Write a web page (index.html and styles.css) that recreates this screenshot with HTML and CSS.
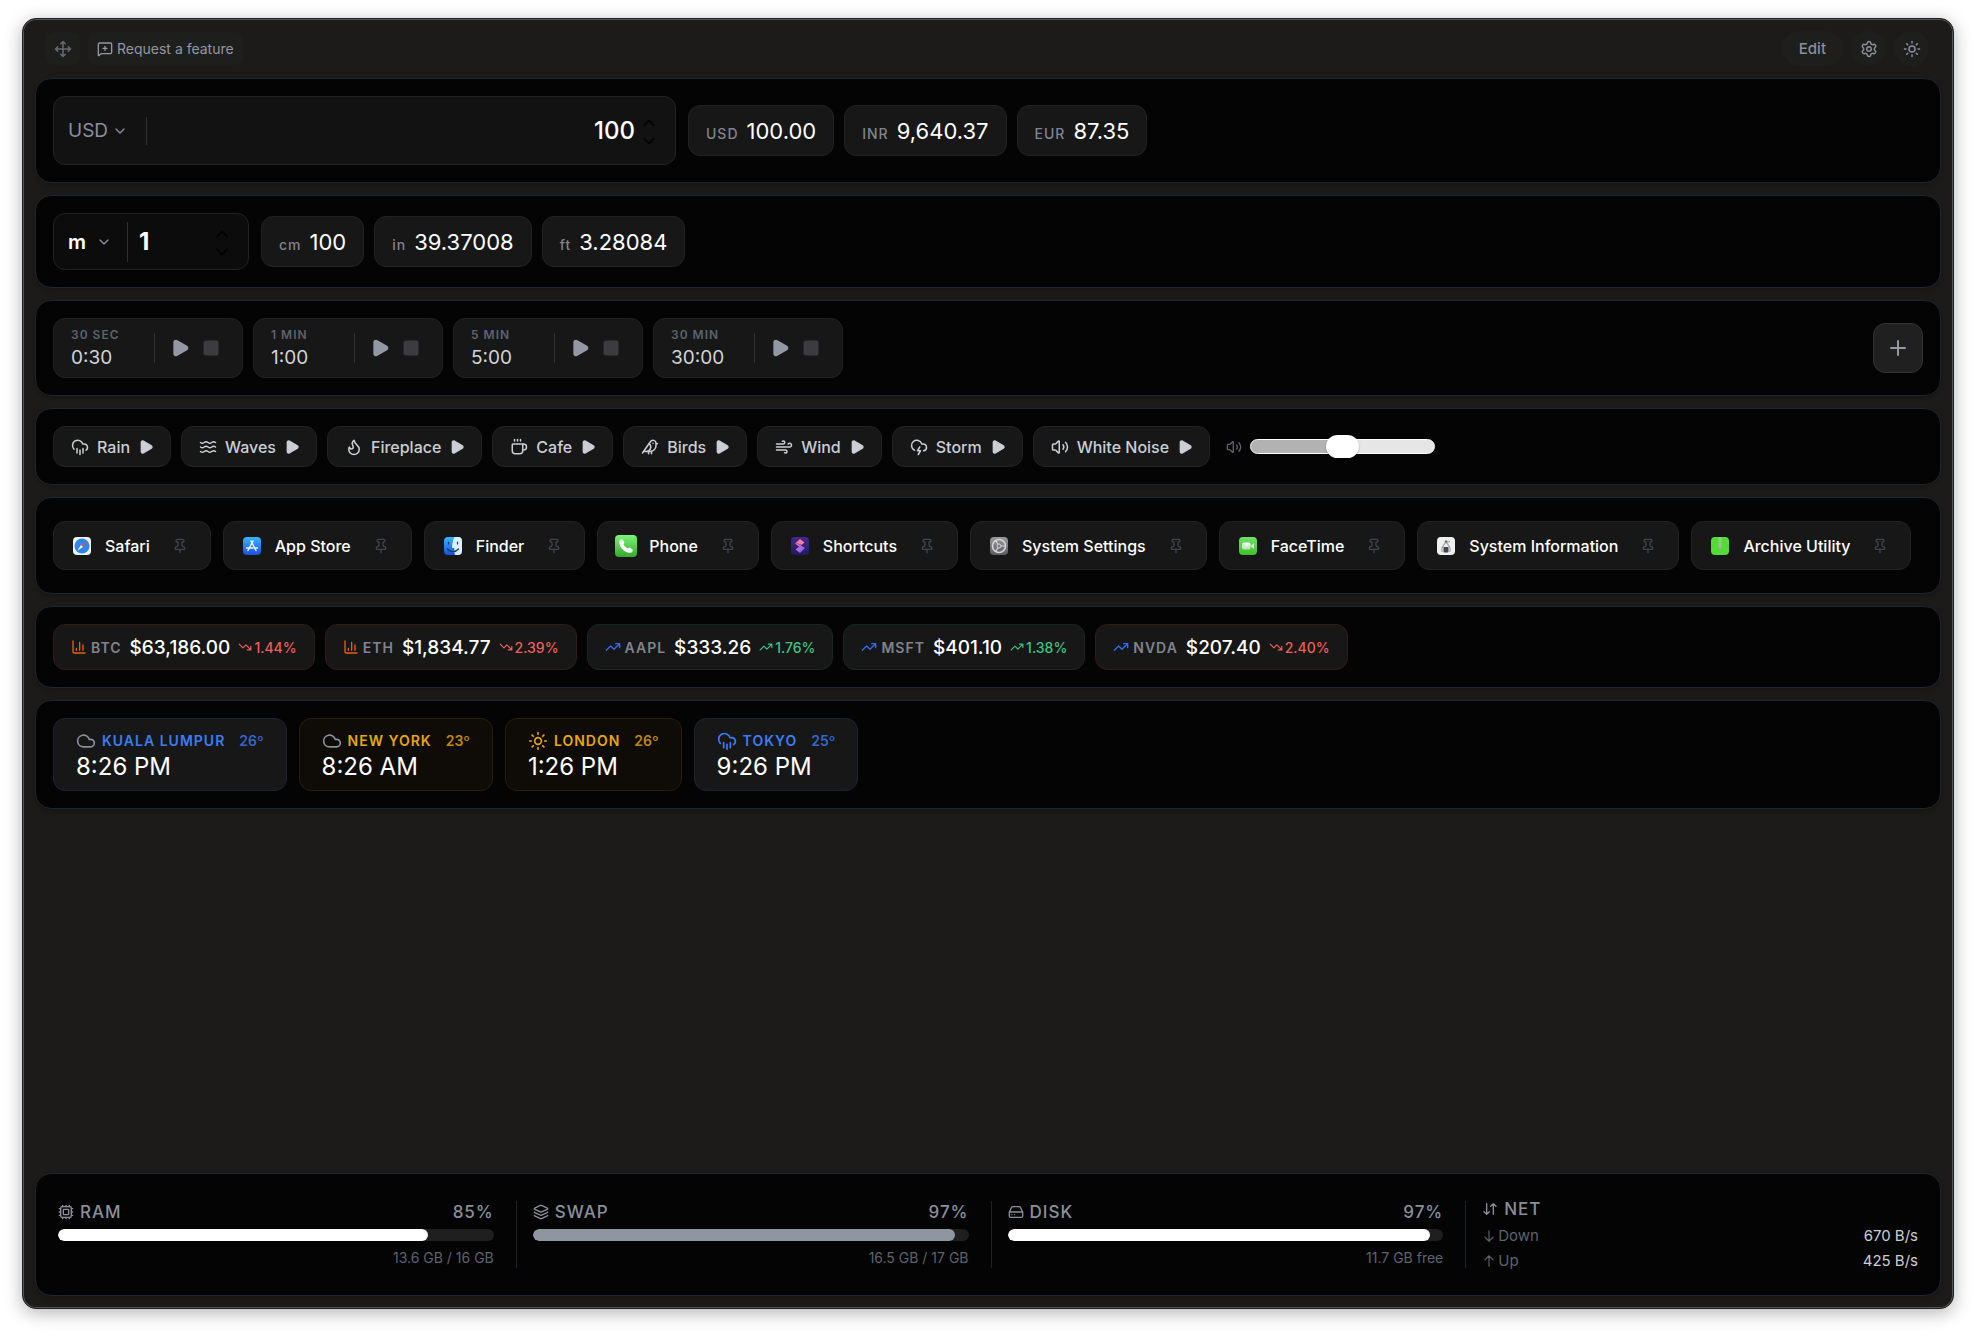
FILE: index.html
```html
<!DOCTYPE html>
<html lang="en">
<head>
    <meta charset="UTF-8">
    <meta name="viewport" content="width=device-width, initial-scale=1.0">
    <title>Dashboard</title>
    <link rel="stylesheet" href="styles.css">
</head>
<body>
    <svg class="sprite" aria-hidden="true">
        <symbol id="move" viewBox="0 0 24 24"><path d="M12 2v20M15 19l-3 3-3-3M19 9l3 3-3 3M2 12h20M5 9l-3 3 3 3M9 5l3-3 3 3"/></symbol>
        <symbol id="message" viewBox="0 0 24 24"><path d="M22 17a2 2 0 0 1-2 2H6.828a2 2 0 0 0-1.414.586l-2.202 2.202A.71.71 0 0 1 2 21.286V5a2 2 0 0 1 2-2h16a2 2 0 0 1 2 2zM12 8v6M9 11h6"/></symbol>
        <symbol id="down" viewBox="0 0 24 24"><path d="m6 9 6 6 6-6"/></symbol>
        <symbol id="up" viewBox="0 0 24 24"><path d="m18 15-6-6-6 6"/></symbol>
        <symbol id="settings" viewBox="0 0 24 24"><path d="M9.671 4.136a2.34 2.34 0 0 1 4.659 0 2.34 2.34 0 0 0 3.319 1.915 2.34 2.34 0 0 1 2.33 4.033 2.34 2.34 0 0 0 0 3.831 2.34 2.34 0 0 1-2.33 4.033 2.34 2.34 0 0 0-3.319 1.915 2.34 2.34 0 0 1-4.659 0 2.34 2.34 0 0 0-3.32-1.915 2.34 2.34 0 0 1-2.33-4.033 2.34 2.34 0 0 0 0-3.831A2.34 2.34 0 0 1 6.35 6.051a2.34 2.34 0 0 0 3.319-1.915"/><circle cx="12" cy="12" r="3"/></symbol>
        <symbol id="sun" viewBox="0 0 24 24"><circle cx="12" cy="12" r="4"/><path d="M12 2v2M12 20v2M4.93 4.93l1.41 1.41M17.66 17.66l1.41 1.41M2 12h2M20 12h2M6.34 17.66l-1.41 1.41M19.07 4.93l-1.41 1.41"/></symbol>
        <symbol id="plus" viewBox="0 0 24 24"><path d="M5 12h14M12 5v14"/></symbol>
        <symbol id="play" viewBox="0 0 24 24"><path fill="currentColor" d="M5 5a2 2 0 0 1 3.008-1.728l11.997 6.998a2 2 0 0 1 .003 3.458l-12 7A2 2 0 0 1 5 19z"/></symbol>
        <symbol id="stop" viewBox="0 0 24 24"><rect fill="currentColor" x="3" y="3" width="18" height="18" rx="2"/></symbol>
        <symbol id="rain" viewBox="0 0 24 24"><path d="M4 14.899A7 7 0 1 1 15.71 8h1.79a4.5 4.5 0 0 1 2.5 8.242M16 14v6M8 14v6M12 16v6"/></symbol>
        <symbol id="waves" viewBox="0 0 24 24"><path d="M2 6c.6.5 1.2 1 2.5 1C7 7 7 5 9.500 5c2.600 0 2.400 2 5 2 2.500 0 2.500-2 5-2 1.300 0 1.900.5 2.500 1M2 12c.6.5 1.200 1 2.500 1 2.500 0 2.500-2 5-2 2.600 0 2.400 2 5 2 2.500 0 2.500-2 5-2 1.300 0 1.900.5 2.500 1M2 18c.6.5 1.200 1 2.500 1 2.500 0 2.500-2 5-2 2.600 0 2.400 2 5 2 2.500 0 2.500-2 5-2 1.300 0 1.900.5 2.500 1"/></symbol>
        <symbol id="flame" viewBox="0 0 24 24"><path d="M8.5 14.5A2.5 2.5 0 0 0 11 12c0-1.380-.5-2-1-3-1.072-2.143-.224-4.054 2-6 .5 2.500 2 4.900 4 6.500 2 1.600 3 3.500 3 5.500a7 7 0 1 1-14 0c0-1.153.433-2.294 1-3a2.500 2.500 0 0 0 2.500 2.500z"/></symbol>
        <symbol id="coffee" viewBox="0 0 24 24"><path d="M10 2v2M14 2v2M6 2v2M16 8a1 1 0 0 1 1 1v8a4 4 0 0 1-4 4H7a4 4 0 0 1-4-4V9a1 1 0 0 1 1-1h14a4 4 0 1 1 0 8h-1"/></symbol>
        <symbol id="bird" viewBox="0 0 24 24"><path d="M16 7h.01M3.400 18H12a8 8 0 0 0 8-8V7a4 4 0 0 0-7.280-2.300L2 20M20 7l2 .5-2 .5M10 18v3M14 17.750V21M7 18a6 6 0 0 0 3.840-10.610"/></symbol>
        <symbol id="wind" viewBox="0 0 24 24"><path d="M12.800 19.600A2 2 0 1 0 14 16H2M17.500 8a2.500 2.500 0 1 1 2 4H2M9.800 4.400A2 2 0 1 1 11 8H2"/></symbol>
        <symbol id="storm" viewBox="0 0 24 24"><path d="M6 16.326A7 7 0 1 1 15.710 8h1.790a4.500 4.500 0 0 1 .5 8.973M13 12l-3 5h4l-3 5"/></symbol>
        <symbol id="volume" viewBox="0 0 24 24"><path d="M11 4.702a.705.705 0 0 0-1.203-.498L6.413 7.587A1.400 1.400 0 0 1 5.416 8H3a1 1 0 0 0-1 1v6a1 1 0 0 0 1 1h2.416a1.400 1.400 0 0 1 .997.413l3.383 3.384A.705.705 0 0 0 11 19.298zM16 9a5 5 0 0 1 0 6M19.364 18.364a9 9 0 0 0 0-12.728"/></symbol>
        <symbol id="pin" viewBox="0 0 24 24"><path d="M12 17v5M9 10.760a2 2 0 0 1-1.110 1.790l-1.780.9A2 2 0 0 0 5 15.240V16a1 1 0 0 0 1 1h12a1 1 0 0 0 1-1v-.76a2 2 0 0 0-1.110-1.790l-1.780-.9A2 2 0 0 1 15 10.760V7a1 1 0 0 1 1-1 2 2 0 0 0 0-4H8a2 2 0 0 0 0 4 1 1 0 0 1 1 1z"/></symbol>
        <symbol id="chart" viewBox="0 0 24 24"><path d="M3 3v16a2 2 0 0 0 2 2h16M18 17V9M13 17V5M8 17v-3"/></symbol>
        <symbol id="trend-up" viewBox="0 0 24 24"><path d="M16 7h6v6M22 7l-8.500 8.500-5-5L2 17"/></symbol>
        <symbol id="trend-down" viewBox="0 0 24 24"><path d="M16 17h6v-6M22 17l-8.500-8.500-5 5L2 7"/></symbol>
        <symbol id="cloud" viewBox="0 0 24 24"><path d="M17.500 19H9a7 7 0 1 1 6.710-9h1.790a4.500 4.500 0 1 1 0 9Z"/></symbol>
        <symbol id="cpu" viewBox="0 0 24 24"><path d="M12 20v2M12 2v2M17 20v2M17 2v2M2 12h2M2 17h2M2 7h2M20 12h2M20 17h2M20 7h2M7 20v2M7 2v2"/><rect x="4" y="4" width="16" height="16" rx="2"/><rect x="8" y="8" width="8" height="8" rx="1"/></symbol>
        <symbol id="layers" viewBox="0 0 24 24"><path d="M12.830 2.180a2 2 0 0 0-1.660 0L2.600 6.080a1 1 0 0 0 0 1.830l8.580 3.910a2 2 0 0 0 1.660 0l8.580-3.900a1 1 0 0 0 0-1.830zM2 12a1 1 0 0 0 .58.91l8.600 3.910a2 2 0 0 0 1.650 0l8.580-3.900A1 1 0 0 0 22 12M2 17a1 1 0 0 0 .58.91l8.600 3.910a2 2 0 0 0 1.650 0l8.580-3.900A1 1 0 0 0 22 17"/></symbol>
        <symbol id="drive" viewBox="0 0 24 24"><path d="M22 12H2M5.450 5.110 2 12v6a2 2 0 0 0 2 2h16a2 2 0 0 0 2-2v-6l-3.450-6.890A2 2 0 0 0 16.760 4H7.240a2 2 0 0 0-1.790 1.110zM6 16h.01M10 16h.01"/></symbol>
        <symbol id="down-up" viewBox="0 0 24 24"><path d="m3 16 4 4 4-4M7 20V4M21 8l-4-4-4 4M17 4v16"/></symbol>
        <symbol id="arrow-down" viewBox="0 0 24 24"><path d="M12 3v18M19 14l-7 7-7-7"/></symbol>
        <symbol id="arrow-up" viewBox="0 0 24 24"><path d="m5 10 7-7 7 7M12 21V3"/></symbol>
        <linearGradient id="g-blue" x2="0" y2="1"><stop offset="0" stop-color="#38b6fb"/><stop offset="1" stop-color="#1c4fe0"/></linearGradient>
        <linearGradient id="g-green" x2="0" y2="1"><stop offset="0" stop-color="#7df577"/><stop offset="1" stop-color="#35a82f"/></linearGradient>
        <linearGradient id="g-lime" x2="0" y2="1"><stop offset="0" stop-color="#6fe06a"/><stop offset="1" stop-color="#43bf2c"/></linearGradient>
        <linearGradient id="g-gray" x2="0" y2="1"><stop offset="0" stop-color="#9a9a9c"/><stop offset="1" stop-color="#5c5c60"/></linearGradient>
        <linearGradient id="g-purple" x2="0" y2="1"><stop offset="0" stop-color="#43298f"/><stop offset="1" stop-color="#231a5c"/></linearGradient>
        <linearGradient id="g-pink" x2="1" y2="1"><stop offset="0" stop-color="#f0709f"/><stop offset=".5" stop-color="#b06be0"/><stop offset="1" stop-color="#4a63f0"/></linearGradient>
        <linearGradient id="g-cam" x2="0" y2="1"><stop offset="0" stop-color="#fff"/><stop offset="1" stop-color="#a9e8a0"/></linearGradient>
    </svg>

    <main class="window">
        <header class="topbar">
            <button class="chip-btn" aria-label="Move"><svg class="icon i18"><use href="#move"/></svg></button>
            <button class="chip-btn request"><svg class="icon i16"><use href="#message"/></svg>Request a feature</button>
            <button class="round-btn edit">Edit</button>
            <button class="round-btn" aria-label="Settings"><svg class="icon i18"><use href="#settings"/></svg></button>
            <button class="round-btn" aria-label="Theme"><svg class="icon i18"><use href="#sun"/></svg></button>
        </header>

        <section class="panel">
            <div class="converter currency">
                <select aria-label="Currency"><option>USD</option><option>INR</option><option>EUR</option></select>
                <svg class="icon i16"><use href="#down"/></svg>
                <input type="text" inputmode="decimal" aria-label="Amount" value="100">
                <span class="spinner">
                    <button aria-label="Increase"><svg class="icon i20"><use href="#up"/></svg></button>
                    <button aria-label="Decrease"><svg class="icon i20"><use href="#down"/></svg></button>
                </span>
            </div>
            <div class="row">
                <div class="value"><span>USD</span><b>100.00</b></div>
                <div class="value"><span>INR</span><b>9,640.37</b></div>
                <div class="value"><span>EUR</span><b>87.35</b></div>
            </div>
        </section>

        <section class="panel">
            <div class="converter unit">
                <select aria-label="Unit"><option>m</option><option>cm</option><option>in</option><option>ft</option></select>
                <svg class="icon i16"><use href="#down"/></svg>
                <input type="text" inputmode="decimal" aria-label="Length" value="1">
                <span class="spinner">
                    <button aria-label="Increase"><svg class="icon i20"><use href="#up"/></svg></button>
                    <button aria-label="Decrease"><svg class="icon i20"><use href="#down"/></svg></button>
                </span>
            </div>
            <div class="row">
                <div class="value"><span>cm</span><b>100</b></div>
                <div class="value"><span>in</span><b>39.37008</b></div>
                <div class="value"><span>ft</span><b>3.28084</b></div>
            </div>
        </section>

        <section class="panel">
            <div class="row">
                <div class="timer">
                    <div><h3>30 SEC</h3><p>0:30</p></div>
                    <div class="timer-controls">
                        <button aria-label="Start"><svg class="icon i20"><use href="#play"/></svg></button>
                        <button class="stop" aria-label="Stop"><svg class="icon i18"><use href="#stop"/></svg></button>
                    </div>
                </div>
                <div class="timer">
                    <div><h3>1 MIN</h3><p>1:00</p></div>
                    <div class="timer-controls">
                        <button aria-label="Start"><svg class="icon i20"><use href="#play"/></svg></button>
                        <button class="stop" aria-label="Stop"><svg class="icon i18"><use href="#stop"/></svg></button>
                    </div>
                </div>
                <div class="timer">
                    <div><h3>5 MIN</h3><p>5:00</p></div>
                    <div class="timer-controls">
                        <button aria-label="Start"><svg class="icon i20"><use href="#play"/></svg></button>
                        <button class="stop" aria-label="Stop"><svg class="icon i18"><use href="#stop"/></svg></button>
                    </div>
                </div>
                <div class="timer">
                    <div><h3>30 MIN</h3><p>30:00</p></div>
                    <div class="timer-controls">
                        <button aria-label="Start"><svg class="icon i20"><use href="#play"/></svg></button>
                        <button class="stop" aria-label="Stop"><svg class="icon i18"><use href="#stop"/></svg></button>
                    </div>
                </div>
            </div>
            <button class="add" aria-label="Add timer"><svg class="icon i24"><use href="#plus"/></svg></button>
        </section>

        <section class="panel">
            <div class="row">
                <button class="sound"><svg class="icon i18"><use href="#rain"/></svg>Rain<svg class="icon i16"><use href="#play"/></svg></button>
                <button class="sound"><svg class="icon i18"><use href="#waves"/></svg>Waves<svg class="icon i16"><use href="#play"/></svg></button>
                <button class="sound"><svg class="icon i18"><use href="#flame"/></svg>Fireplace<svg class="icon i16"><use href="#play"/></svg></button>
                <button class="sound"><svg class="icon i18"><use href="#coffee"/></svg>Cafe<svg class="icon i16"><use href="#play"/></svg></button>
                <button class="sound"><svg class="icon i18"><use href="#bird"/></svg>Birds<svg class="icon i16"><use href="#play"/></svg></button>
                <button class="sound"><svg class="icon i18"><use href="#wind"/></svg>Wind<svg class="icon i16"><use href="#play"/></svg></button>
                <button class="sound"><svg class="icon i18"><use href="#storm"/></svg>Storm<svg class="icon i16"><use href="#play"/></svg></button>
                <button class="sound"><svg class="icon i18"><use href="#volume"/></svg>White Noise<svg class="icon i16"><use href="#play"/></svg></button>
            </div>
            <label class="volume">
                <svg class="icon i16"><use href="#volume"/></svg>
                <input type="range" aria-label="Volume" min="0" max="100" value="50">
            </label>
        </section>

        <section class="panel apps">
            <button class="app">
                <svg class="app-icon" viewBox="0 0 22 22"><rect x="2" y="2" width="18" height="18" rx="4" fill="#f1f3f6"/><circle cx="11" cy="11" r="7.500" fill="#2f86ee"/><path d="m15.500 6.500-3.500 5.500-2-2z" fill="#f04a3c"/><path d="m6.500 15.500 5.500-3.500-2-2z" fill="#fff"/></svg>
                Safari<svg class="icon i16"><use href="#pin"/></svg>
            </button>
            <button class="app">
                <svg class="app-icon" viewBox="0 0 22 22"><rect x="2" y="2" width="18" height="18" rx="4" fill="url(#g-blue)"/><path d="M12 6 7 15.500M10 6l5 9.500M5.500 13h6.500M14.500 13h2" fill="none" stroke="#e8f3ff" stroke-width="1.500" stroke-linecap="round"/></svg>
                App Store<svg class="icon i16"><use href="#pin"/></svg>
            </button>
            <button class="app">
                <svg class="app-icon" viewBox="0 0 22 22"><rect x="2" y="2" width="18" height="18" rx="4" fill="url(#g-blue)"/><path d="M12.500 2H16a4 4 0 0 1 4 4v10a4 4 0 0 1-4 4h-3c-.5-2-.8-4-.7-7H10c.2-5 1-8 2.500-11z" fill="#dcefff"/><path d="M6.500 7v2M15.500 7v2M5.500 14c3 3.500 8 3.500 11 0" fill="none" stroke="#143a72" stroke-width="1.200" stroke-linecap="round"/></svg>
                Finder<svg class="icon i16"><use href="#pin"/></svg>
            </button>
            <button class="app">
                <svg class="app-icon" viewBox="0 0 22 22"><rect width="22" height="22" rx="4" fill="url(#g-green)"/><path d="M7.500 4.500c-1.500-.8-3.500.8-3.300 3C4.600 12.500 9.500 17.400 14.500 17.800c2.200.2 3.800-1.800 3-3.300l-2.700-1.900c-.8-.4-1.600.9-2.400.7C10.600 12.500 9.200 11 8.600 9.600c-.2-.8 1-1.600.8-2.400z" fill="#fff"/></svg>
                Phone<svg class="icon i16"><use href="#pin"/></svg>
            </button>
            <button class="app">
                <svg class="app-icon" viewBox="0 0 22 22"><rect x="2" y="2" width="18" height="18" rx="4" fill="url(#g-purple)"/><path d="m6 8.500 5-4.500 4.500 3.500-3 2.500L9 8.500z" fill="#ef7fa0"/><path d="m6 8.500 3 0 7 4.500-5 5-4.500-3.500 3-2.500 1.500.5z" fill="url(#g-pink)"/></svg>
                Shortcuts<svg class="icon i16"><use href="#pin"/></svg>
            </button>
            <button class="app">
                <svg class="app-icon" viewBox="0 0 22 22"><rect x="2" y="2" width="18" height="18" rx="4" fill="url(#g-gray)"/><circle cx="11" cy="11" r="6.500" fill="none" stroke="#d5d5d8" stroke-width="1.500"/><circle cx="11" cy="11" r="2" fill="none" stroke="#d5d5d8"/><path d="M13 11h4.500M10 9.200 7.700 5.400M10 12.800l-2.300 3.800" stroke="#d5d5d8" stroke-width="1.200"/></svg>
                System Settings<svg class="icon i16"><use href="#pin"/></svg>
            </button>
            <button class="app">
                <svg class="app-icon" viewBox="0 0 22 22"><rect x="2" y="2" width="18" height="18" rx="4" fill="url(#g-lime)"/><rect x="5" y="7.500" width="8.500" height="7" rx="1.800" fill="url(#g-cam)"/><path d="m14.300 10 2.700-1.700v5.400L14.300 12z" fill="#d8f6d2"/></svg>
                FaceTime<svg class="icon i16"><use href="#pin"/></svg>
            </button>
            <button class="app">
                <svg class="app-icon" viewBox="0 0 22 22"><rect x="2" y="2" width="18" height="18" rx="4" fill="#f0f0f0"/><path d="M11 6.500 7 13v4M11 6.500l4 6.500v4M10 7.500l5-1" fill="none" stroke="#9a9da3" stroke-width="1.200"/><circle cx="11" cy="6.500" r="1.300" fill="#6d7178"/><rect x="8.500" y="12" width="5" height="5.500" rx=".8" fill="#43474d"/></svg>
                System Information<svg class="icon i16"><use href="#pin"/></svg>
            </button>
            <button class="app">
                <svg class="app-icon" viewBox="0 0 22 22"><rect x="2" y="2" width="18" height="18" rx="4" fill="#55db38"/><path d="M11 2.500v8" stroke="#b9c9b4" stroke-width="3" stroke-dasharray="1 1"/><rect x="9.500" y="8" width="3" height="5.500" rx="1.500" fill="#a5b8a0"/></svg>
                Archive Utility<svg class="icon i16"><use href="#pin"/></svg>
            </button>
        </section>

        <section class="panel">
            <div class="row">
                <div class="ticker loss"><svg class="icon i16 crypto"><use href="#chart"/></svg><span>BTC</span><b>$63,186.00</b><em><svg class="icon i14"><use href="#trend-down"/></svg>1.44%</em></div>
                <div class="ticker loss"><svg class="icon i16 crypto"><use href="#chart"/></svg><span>ETH</span><b>$1,834.77</b><em><svg class="icon i14"><use href="#trend-down"/></svg>2.39%</em></div>
                <div class="ticker gain"><svg class="icon i16 stock"><use href="#trend-up"/></svg><span>AAPL</span><b>$333.26</b><em><svg class="icon i14"><use href="#trend-up"/></svg>1.76%</em></div>
                <div class="ticker gain"><svg class="icon i16 stock"><use href="#trend-up"/></svg><span>MSFT</span><b>$401.10</b><em><svg class="icon i14"><use href="#trend-up"/></svg>1.38%</em></div>
                <div class="ticker loss"><svg class="icon i16 stock"><use href="#trend-up"/></svg><span>NVDA</span><b>$207.40</b><em><svg class="icon i14"><use href="#trend-down"/></svg>2.40%</em></div>
            </div>
        </section>

        <section class="panel">
            <div class="row clocks">
                <div class="clock night"><h3><svg class="icon i20 gray"><use href="#cloud"/></svg>KUALA LUMPUR<span>26º</span></h3><p>8:26 PM</p></div>
                <div class="clock day"><h3><svg class="icon i20 gray"><use href="#cloud"/></svg>NEW YORK<span>23º</span></h3><p>8:26 AM</p></div>
                <div class="clock day"><h3><svg class="icon i20"><use href="#sun"/></svg>LONDON<span>26º</span></h3><p>1:26 PM</p></div>
                <div class="clock night"><h3><svg class="icon i20"><use href="#rain"/></svg>TOKYO<span>25º</span></h3><p>9:26 PM</p></div>
            </div>
        </section>

        <footer class="panel stats">
            <div class="stat">
                <h3><svg class="icon i16"><use href="#cpu"/></svg>RAM<span>85%</span></h3>
                <div class="bar"><div class="fill" style="width: 85%"></div></div>
                <p>13.6 GB / 16 GB</p>
            </div>
            <div class="stat">
                <h3><svg class="icon i16"><use href="#layers"/></svg>SWAP<span>97%</span></h3>
                <div class="bar"><div class="fill muted" style="width: 97%"></div></div>
                <p>16.5 GB / 17 GB</p>
            </div>
            <div class="stat">
                <h3><svg class="icon i16"><use href="#drive"/></svg>DISK<span>97%</span></h3>
                <div class="bar"><div class="fill" style="width: 97%"></div></div>
                <p>11.7 GB free</p>
            </div>
            <div class="stat net">
                <h3><svg class="icon i16"><use href="#down-up"/></svg>NET</h3>
                <div class="net-row"><svg class="icon i14"><use href="#arrow-down"/></svg>Down<b>670 B/s</b></div>
                <div class="net-row"><svg class="icon i14"><use href="#arrow-up"/></svg>Up<b>425 B/s</b></div>
            </div>
        </footer>
    </main>
</body>
</html>
```
FILE: styles.css
```css
* {
    box-sizing: border-box;
}

body {
    margin: 0;
    padding: 18px 22px 25px;
    background: #fff;
    font-family: Inter, "Liberation Sans", sans-serif;
    color: #fff;
}

h3, p {
    margin: 0;
}

b, em {
    font-weight: 500;
    font-style: normal;
}

button, input, select {
    font: inherit;
    color: inherit;
    background: none;
    border: none;
    padding: 0;
    margin: 0;
}

button {
    cursor: pointer;
}

.sprite {
    position: absolute;
    width: 0;
    height: 0;
}

.icon {
    flex: none;
    display: block;
    fill: none;
    stroke: currentColor;
    stroke-width: 2;
    stroke-linecap: round;
    stroke-linejoin: round;
}

.i14 { width: 14px; height: 14px; }
.i16 { width: 16px; height: 16px; }
.i18 { width: 18px; height: 18px; }
.i20 { width: 20px; height: 20px; }
.i24 { width: 24px; height: 24px; }

.window {
    display: flex;
    flex-direction: column;
    gap: 12px;
    min-height: calc(100vh - 43px);
    padding: 0 12px 12px;
    background: #1c1b19;
    border: 1px solid #202224;
    border-radius: 14px;
    box-shadow: inset 0 0 0 1px #53565b, 0 4px 18px rgba(0, 0, 0, 0.3);
}

/* top bar */
.topbar {
    display: flex;
    align-items: center;
    gap: 8px;
    height: 59px;
    margin-bottom: -12px;
    padding: 0 12px 0 11px;
    color: #8b8f9b;
}

.chip-btn, .round-btn {
    display: flex;
    align-items: center;
    justify-content: center;
    background: #1e1e1d;
}

.chip-btn {
    height: 33px;
    padding: 0 8px;
    border-radius: 8px;
    color: #666b78;
}

.request {
    gap: 4px;
    padding: 0 9px;
    font-size: 14px;
    font-weight: 400;
    color: #9297a3;
}

.round-btn {
    width: 35px;
    height: 35px;
    border-radius: 18px;
}

.edit {
    width: auto;
    margin-left: auto;
    padding: 0 17px;
    font-size: 15px;
    font-weight: 500;
}

/* panels */
.panel {
    display: flex;
    align-items: center;
    gap: 12px;
    padding: 17px;
    background: #040404;
    border: 1px solid #1c2632;
    border-radius: 16px;
    box-shadow: 0 2px 4px rgba(0, 0, 0, 0.2);
}

.row {
    display: flex;
    gap: 10px;
}

.converter, .value, .timer, .sound, .app, .ticker, .clock {
    display: flex;
    align-items: center;
    background: #171717;
    border: 1px solid #222;
    border-radius: 12px;
}

.converter {
    padding: 0 16px 0 14px;
}

.converter select {
    appearance: none;
    outline: none;
}

.converter input {
    flex: 1;
    min-width: 0;
    border-left: 1px solid #2e2e30;
    font-size: 24px;
    font-weight: 500;
}

.converter > .icon {
    color: #8b8f9b;
}

.currency {
    width: 623px;
    height: 69px;
    background: #121212;
}

.currency select {
    width: 44px;
    font-size: 19px;
    color: #8b8f9b;
}

.currency input {
    height: 28px;
    margin: 0 4px 0 18px;
    text-align: right;
}

.unit {
    width: 196px;
    height: 57px;
    background: #0c0c0c;
}

.unit select {
    width: 28px;
    font-size: 20px;
    font-weight: 600;
}

.unit input {
    height: 40px;
    margin-left: 15px;
    padding-left: 11px;
    font-weight: 700;
}

.spinner {
    color: #000;
}

.spinner button {
    display: block;
    height: 18px;
}

.value {
    gap: 8px;
    height: 51px;
    padding: 0 17px;
    font-size: 14px;
}

.value span {
    padding-top: 5px;
    font-weight: 500;
    letter-spacing: 1px;
    color: #80848f;
}

.value b {
    font-size: 22px;
    font-weight: 400;
}

/* timers */
.timer {
    justify-content: space-between;
    width: 190px;
    height: 60px;
    padding: 0 22px 0 17px;
}

.timer h3 {
    font-size: 12px;
    line-height: 15px;
    font-weight: 600;
    letter-spacing: 1px;
    color: #5d626e;
}

.timer p {
    padding-top: 4px;
    font-size: 19px;
    line-height: 24px;
    color: #d1d3d8;
}

.timer-controls {
    display: flex;
    align-items: center;
    gap: 12px;
    height: 30px;
    padding-left: 15px;
    border-left: 1px solid #2e2e30;
    color: #9498a5;
}

.stop {
    color: #3c3c40;
}

.add {
    display: flex;
    align-items: center;
    justify-content: center;
    width: 50px;
    height: 50px;
    margin-left: auto;
    background: #202020;
    border: 1px solid #323232;
    border-radius: 12px;
    color: #9498a5;
}

/* sounds */
.sound {
    gap: 8px;
    height: 41px;
    padding: 0 16px 0 17px;
    font-size: 16px;
    font-weight: 500;
    color: #cbced5;
}

.volume {
    display: flex;
    align-items: center;
    gap: 8px;
    padding-left: 4px;
    color: #5d626e;
}

.volume input {
    appearance: none;
    width: 185px;
    height: 15px;
    border: 1px solid #fff;
    border-radius: 8px;
    background: linear-gradient(90deg, #b2b2b2 50%, #e6e6e6 50%);
}

.volume input::-webkit-slider-thumb {
    appearance: none;
    width: 33px;
    height: 23px;
    border-radius: 12px;
    background: #fff;
    box-shadow: 0 1px 2px rgba(0, 0, 0, 0.3);
}

/* apps */
.apps {
    padding: 23px 17px;
}

.app {
    gap: 12px;
    height: 49px;
    padding: 0 22px 0 17px;
    font-size: 16px;
    font-weight: 500;
    white-space: nowrap;
}

.app-icon {
    width: 22px;
    height: 22px;
}

.app .icon {
    margin-left: 10px;
    color: #40444e;
}

/* tickers */
.ticker {
    gap: 4px;
    height: 46px;
    padding: 0 17px;
    font-size: 14px;
}

.ticker span {
    font-weight: 600;
    letter-spacing: 1px;
    color: #80848f;
}

.ticker b {
    margin: 0 4px;
    font-size: 19px;
}

.ticker em {
    display: flex;
    align-items: center;
    gap: 2px;
}

.loss { border-color: #331a1a; }
.gain { border-color: #18271f; }
.loss em { color: #ee5e5a; }
.gain em { color: #3fc285; }
.crypto { color: #e8620c; }
.stock { color: #2f6cf2; }

/* clocks */
.clocks {
    gap: 12px;
}

.clock {
    display: block;
    height: 73px;
    padding: 12px 22px;
}

.clock h3 {
    display: flex;
    align-items: center;
    gap: 6px;
    font-size: 14px;
    line-height: 20px;
    font-weight: 600;
    letter-spacing: 1px;
}

.clock h3 span {
    margin-left: 8px;
    letter-spacing: 0;
    opacity: 0.8;
}

.clock p {
    font-size: 24px;
    line-height: 32px;
    color: #fff;
}

.clock .gray {
    color: #8b8f9b;
}

.night {
    border-color: #1c2236;
    color: #3b7cf6;
}

.day {
    background: #0f0c07;
    border-color: #2a1c0e;
    color: #e6a70c;
}

/* system stats */
.stats {
    gap: 0;
    margin-top: auto;
    padding: 27px 0 27px 6px;
}

.stat {
    flex: 1;
    height: 67px;
    padding: 0 22px 0 16px;
    border-right: 1px solid #1a222c;
    color: #5d626e;
}

.stat:last-child {
    border-right: none;
}

.stat h3 {
    display: flex;
    align-items: center;
    gap: 6px;
    padding-bottom: 6px;
    font-size: 17px;
    line-height: 22px;
    font-weight: 500;
    letter-spacing: 1px;
    color: #8b8f9b;
}

.stat h3 span {
    margin-left: auto;
}

.bar {
    height: 12px;
    border-radius: 6px;
    overflow: hidden;
    background: #1f1f1f;
}

.fill {
    height: 100%;
    border-radius: 6px;
    background: #fff;
}

.muted {
    background: #9095a2;
}

.stat p {
    padding-top: 7px;
    font-size: 14px;
    line-height: 20px;
    text-align: right;
}

.stat.net h3 {
    padding-bottom: 6px;
    line-height: 12px;
}

.net-row {
    display: flex;
    align-items: center;
    gap: 2px;
    font-size: 15px;
    line-height: 25px;
}

.net-row b {
    margin-left: auto;
    font-weight: 400;
    color: #cbced5;
}
```
